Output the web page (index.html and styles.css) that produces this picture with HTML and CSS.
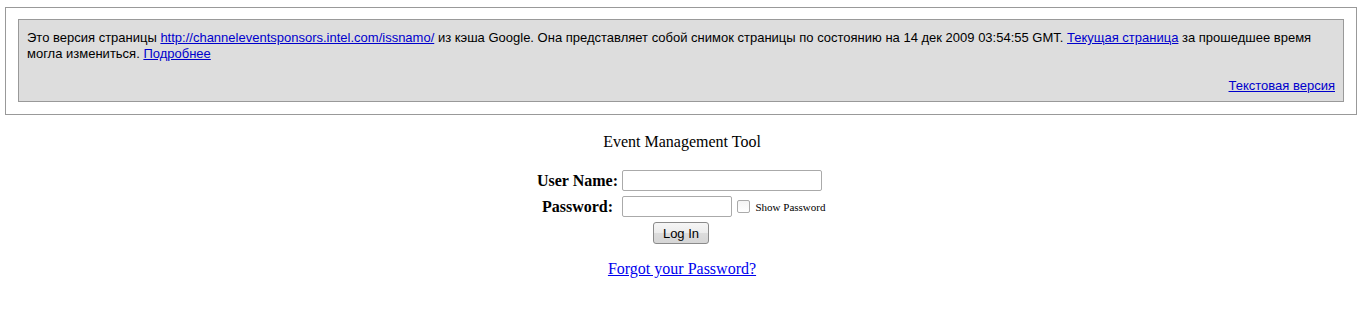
FILE: index.html
```html
<!DOCTYPE html>
<html lang="ru">
<head>
  <meta charset="UTF-8" />
  <title>Event Management Tool</title>
  <link rel="stylesheet" href="styles.css">
</head>
<body>
  <div class="cache-outer">
    <div class="cache-inner">
      <div class="cache-text">
        Это версия страницы <a href="#">http://channeleventsponsors.intel.com/issnamo/</a> из кэша Google. Она представляет собой снимок страницы по состоянию на 14 дек 2009 03:54:55 GMT. <a href="#">Текущая страница</a> за прошедшее время могла измениться. <a href="#">Подробнее</a>
      </div>
      <div class="cache-links"><a href="#">Текстовая версия</a></div>
    </div>
  </div>

  <div class="login">
    <div class="title">Event Management Tool</div>

    <form class="login-form" onsubmit="return false;">
      <label class="field-label" for="user">User Name:</label>
      <div class="field"><input class="text-input wide" type="text" id="user"></div>

      <label class="field-label" for="pass">Password:</label>
      <div class="field">
        <input class="text-input narrow" type="password" id="pass">
        <input class="show-box" type="checkbox" id="show">
        <label class="show-label" for="show">Show Password</label>
      </div>

      <div class="actions"><button class="login-btn" type="submit">Log In</button></div>
    </form>

    <a class="forgot" href="#">Forgot your Password?</a>
  </div>
</body>
</html>
```

FILE: styles.css
```css
* { box-sizing: border-box; }
body {
  margin: 0;
  font-family: "Liberation Serif", "Times New Roman", serif;
  font-size: 16px;
  color: #000;
  background: #fff;
}

/* google cache header */
.cache-outer {
  margin: 7px 7px 0 5px;
  border: 1px solid #999;
  background: #fff;
  padding: 11px 12px 12px 12px;
}
.cache-inner {
  border: 1px solid #999;
  background: #ddd;
  padding: 10px 8px 7px 8px;
  font: 13px/16px "Liberation Sans", Arial, sans-serif;
  color: #000;
}
.cache-inner a { color: #00c; }
.cache-links {
  margin-top: 16px;
  text-align: right;
}

/* login */
.login {
  display: flex;
  flex-direction: column;
  align-items: center;
}
.title {
  margin-top: 18px;
  line-height: 18px;
}
.login-form {
  margin-top: 19px;
  margin-right: 2px;
  display: grid;
  grid-template-columns: 86px auto;
  grid-auto-rows: 21px;
  row-gap: 5px;
  column-gap: 1px;
}
.field-label {
  font-weight: bold;
  text-align: center;
  line-height: 21px;
}
.field {
  display: flex;
  align-items: center;
  padding-right: 2px;
}
.text-input {
  height: 21px;
  border: 1px solid #aaa;
  border-radius: 2px;
  padding: 1px 3px;
  font: 13px "Liberation Sans", Arial, sans-serif;
  background: #fff;
}
.text-input.wide { width: 200px; }
.text-input.narrow { width: 110px; }
.show-box {
  width: 13px;
  height: 13px;
  margin: 0 6px 0 5px;
  appearance: none;
  border: 1px solid #aaa;
  border-radius: 2px;
  background: linear-gradient(#f4f4f4, #fff);
}
.show-label {
  font-size: 11px;
  white-space: nowrap;
}
.actions {
  grid-column: 1 / 3;
  display: flex;
  justify-content: center;
}
.login-btn {
  height: 22px;
  width: 56px;
  padding: 0;
  font: 13px "Liberation Sans", Arial, sans-serif;
  color: #000;
  border: 1px solid #8a8a8a;
  border-radius: 3px;
  background: linear-gradient(#f6f6f6 0%, #ececec 50%, #dcdcdc 51%, #d6d6d6 100%);
}
.forgot {
  margin-top: 17px;
  color: #00e;
  line-height: 18px;
}
```
